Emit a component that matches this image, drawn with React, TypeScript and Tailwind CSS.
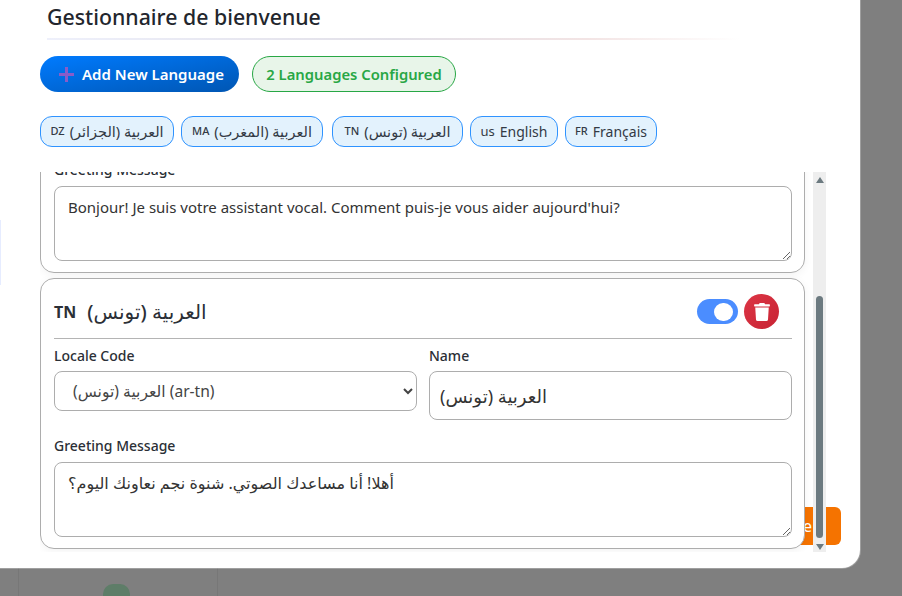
import { FaTrash } from 'react-icons/fa'

const LANGS = [
  { code: 'DZ', name: 'العربية (الجزائر)', arabic: true, width: 'w-[134px]' },
  { code: 'MA', name: 'العربية (المغرب)', arabic: true, width: 'w-[142px] mr-[2px]' },
  { code: 'TN', name: 'العربية (تونس)', arabic: true, width: 'w-[131px]' },
  { code: 'us', name: 'English', arabic: false, width: 'w-[88px]' },
  { code: 'FR', name: 'Français', arabic: false, width: 'w-[92px]' },
]

function LangCard({ code, name, locale, greeting, inputSize, textSize, className }: { code: string; name: string; locale: string; greeting: string; inputSize: string; textSize: string; className: string }) {
  return (
    <div className={`h-[271px] shrink-0 rounded-[14px] border border-[#adadad] bg-white pt-[15px] pr-[12px] pl-[13px] shadow-[0_2px_8px_rgba(0,0,0,0.05)] ${className}`}>
      <div className="flex h-[45px] items-start justify-between border-b border-[#b4b4b4] pr-[13px]">
        <h3 className="flex h-[35px] items-center gap-[11px] text-[20px] font-medium text-[#2b2f36]">
          <span className="text-[16px] font-bold">{code}</span>
          <span>{name}</span>
        </h3>
        <div className="flex items-center gap-[6px]">
          <span className="flex h-[25px] w-[41px] items-center justify-end rounded-full bg-[#4b8dff] pr-[5px]">
            <span className="h-[18px] w-[19px] rounded-full bg-white" />
          </span>
          <button className="flex h-[35px] w-[35px] items-center justify-center rounded-full bg-gradient-to-br from-[#dc3545] to-[#c82333] text-white">
            <FaTrash size={18} />
          </button>
        </div>
      </div>
      <div className="mt-[7px] grid grid-cols-2 gap-x-[12px]">
        <div>
          <label className="block text-[14px] leading-[20px] font-medium text-[#2b2f36]">Locale Code</label>
          <select defaultValue={locale} className="mt-[5px] h-[40px] w-full rounded-[8px] border border-[#adadad] bg-white px-[14px] text-[15.6px] text-[#444]">
            <option value={locale}>{name} ({locale})</option>
          </select>
        </div>
        <div>
          <label className="block text-[14px] leading-[20px] font-medium text-[#2b2f36]">Name</label>
          <input defaultValue={name} className={`mt-[5px] h-[49px] w-full rounded-[8px] border border-[#adadad] bg-white px-[10px] text-[#333] ${inputSize}`} />
        </div>
      </div>
      <label className="mt-[16px] block text-[14px] leading-[20px] font-medium text-[#2b2f36]">Greeting Message</label>
      <textarea
        defaultValue={greeting}
        className={`mt-[6px] block h-[75px] w-full resize-y rounded-[8px] border border-[#adadad] bg-white px-[13px] py-[10px] leading-[20px] text-[#333] ${textSize}`}
      />
    </div>
  )
}

export default function App() {
  return (
    <div className="flex h-[596px] flex-col overflow-hidden bg-[#7f7f7f] font-['Noto_Sans','DejaVu_Sans',sans-serif]">
      <div className="relative h-[568px] w-[860px] shrink-0 rounded-br-[18px] bg-white pl-[40px] shadow-[0_0_0_1px_rgba(255,255,255,0.25)]">
        <div className="absolute top-[220px] left-0 h-[65px] w-[1px] bg-[#e6ecff]" />
        <h2 className="pt-[2px] pl-[7px] text-[21.3px] leading-[30px] font-medium text-[#23262d]">Gestionnaire de bienvenue</h2>
        <div className="mt-[6px] ml-[7px] h-[2px] w-[693px] bg-[linear-gradient(90deg,#eef0fb,#e2e0e8_50%,#f3e4e4_78%,#ffffff)]" />

        <div className="mt-[16px] flex gap-[13px]">
          <button className="flex h-[36px] w-[199px] items-center gap-[8px] rounded-full bg-gradient-to-br from-[#007bff] to-[#0056b3] pl-[19px] text-[15px] font-semibold text-white">
            <svg width="15" height="15" viewBox="0 0 15 15" fill="#8a5cc8">
              <path d="M6 0h3v6h6v3H9v6H6V9H0V6h6z" />
            </svg>
            Add New Language
          </button>
          <span className="flex h-[36px] w-[204px] items-center justify-center rounded-full border border-[#28a745] bg-[#e8f5e9] text-[14.8px] font-semibold text-[#28a745]">
            2 Languages Configured
          </span>
        </div>

        <div className="mt-[24px] flex gap-[7px]">
          {LANGS.map((l) => (
            <span key={l.code} className={`flex h-[31px] items-center justify-center gap-[5px] rounded-[12px] border border-[#2f93ff] bg-[#e3f2fd] text-[14px] text-[#333a45] ${l.width}`}>
              <span className={l.code === 'us' ? 'text-[13px]' : 'text-[11px] font-medium'}>{l.code}</span>
              <span className={l.arabic ? 'text-[14.5px]' : ''}>{l.name}</span>
            </span>
          ))}
        </div>

        <div className="absolute top-[507px] left-[790px] flex h-[38px] w-[51px] items-center justify-end rounded-[6px] bg-[#f57300] pr-[29px] text-[16px] text-white">
          e
        </div>

        <div className="relative mt-[25px] flex h-[380px] w-[787px]">
          <div className="flex w-[773px] flex-col gap-[5px] overflow-hidden pr-[8px]">
            <LangCard code="FR" name="Français" locale="fr-fr" inputSize="text-[16px]" textSize="text-[15px]" greeting="Bonjour! Je suis votre assistant vocal. Comment puis-je vous aider aujourd'hui?" className="-mt-[170px]" />
            <LangCard code="TN" name="العربية (تونس)" locale="ar-tn" inputSize="text-[18px]" textSize="text-[16px]" greeting="أهلا! أنا مساعدك الصوتي. شنوة نجم نعاونك اليوم؟" className="" />
          </div>
          <div className="flex w-[13px] flex-col items-center bg-[#eeeeee]">
            <svg className="mt-[5px] shrink-0" width="8" height="6" viewBox="0 0 8 6" fill="#6c7a80"><path d="M4 0l4 6H0z" /></svg>
            <div className="mt-[113px] h-[242px] w-[7px] shrink-0 rounded-full bg-[#6c7a80]" />
            <svg className="mt-[6px] shrink-0" width="8" height="6" viewBox="0 0 8 6" fill="#6c7a80"><path d="M4 6l4-6H0z" /></svg>
          </div>
        </div>
      </div>
      <div className="ml-[18px] h-[28px] w-[200px] border-x border-[#777777] bg-[#7f7f7f] pt-[16px] pl-[84px]">
        <div className="h-[24px] w-[27px] rounded-[10px] bg-[#5e7d68]" />
      </div>
    </div>
  )
}
